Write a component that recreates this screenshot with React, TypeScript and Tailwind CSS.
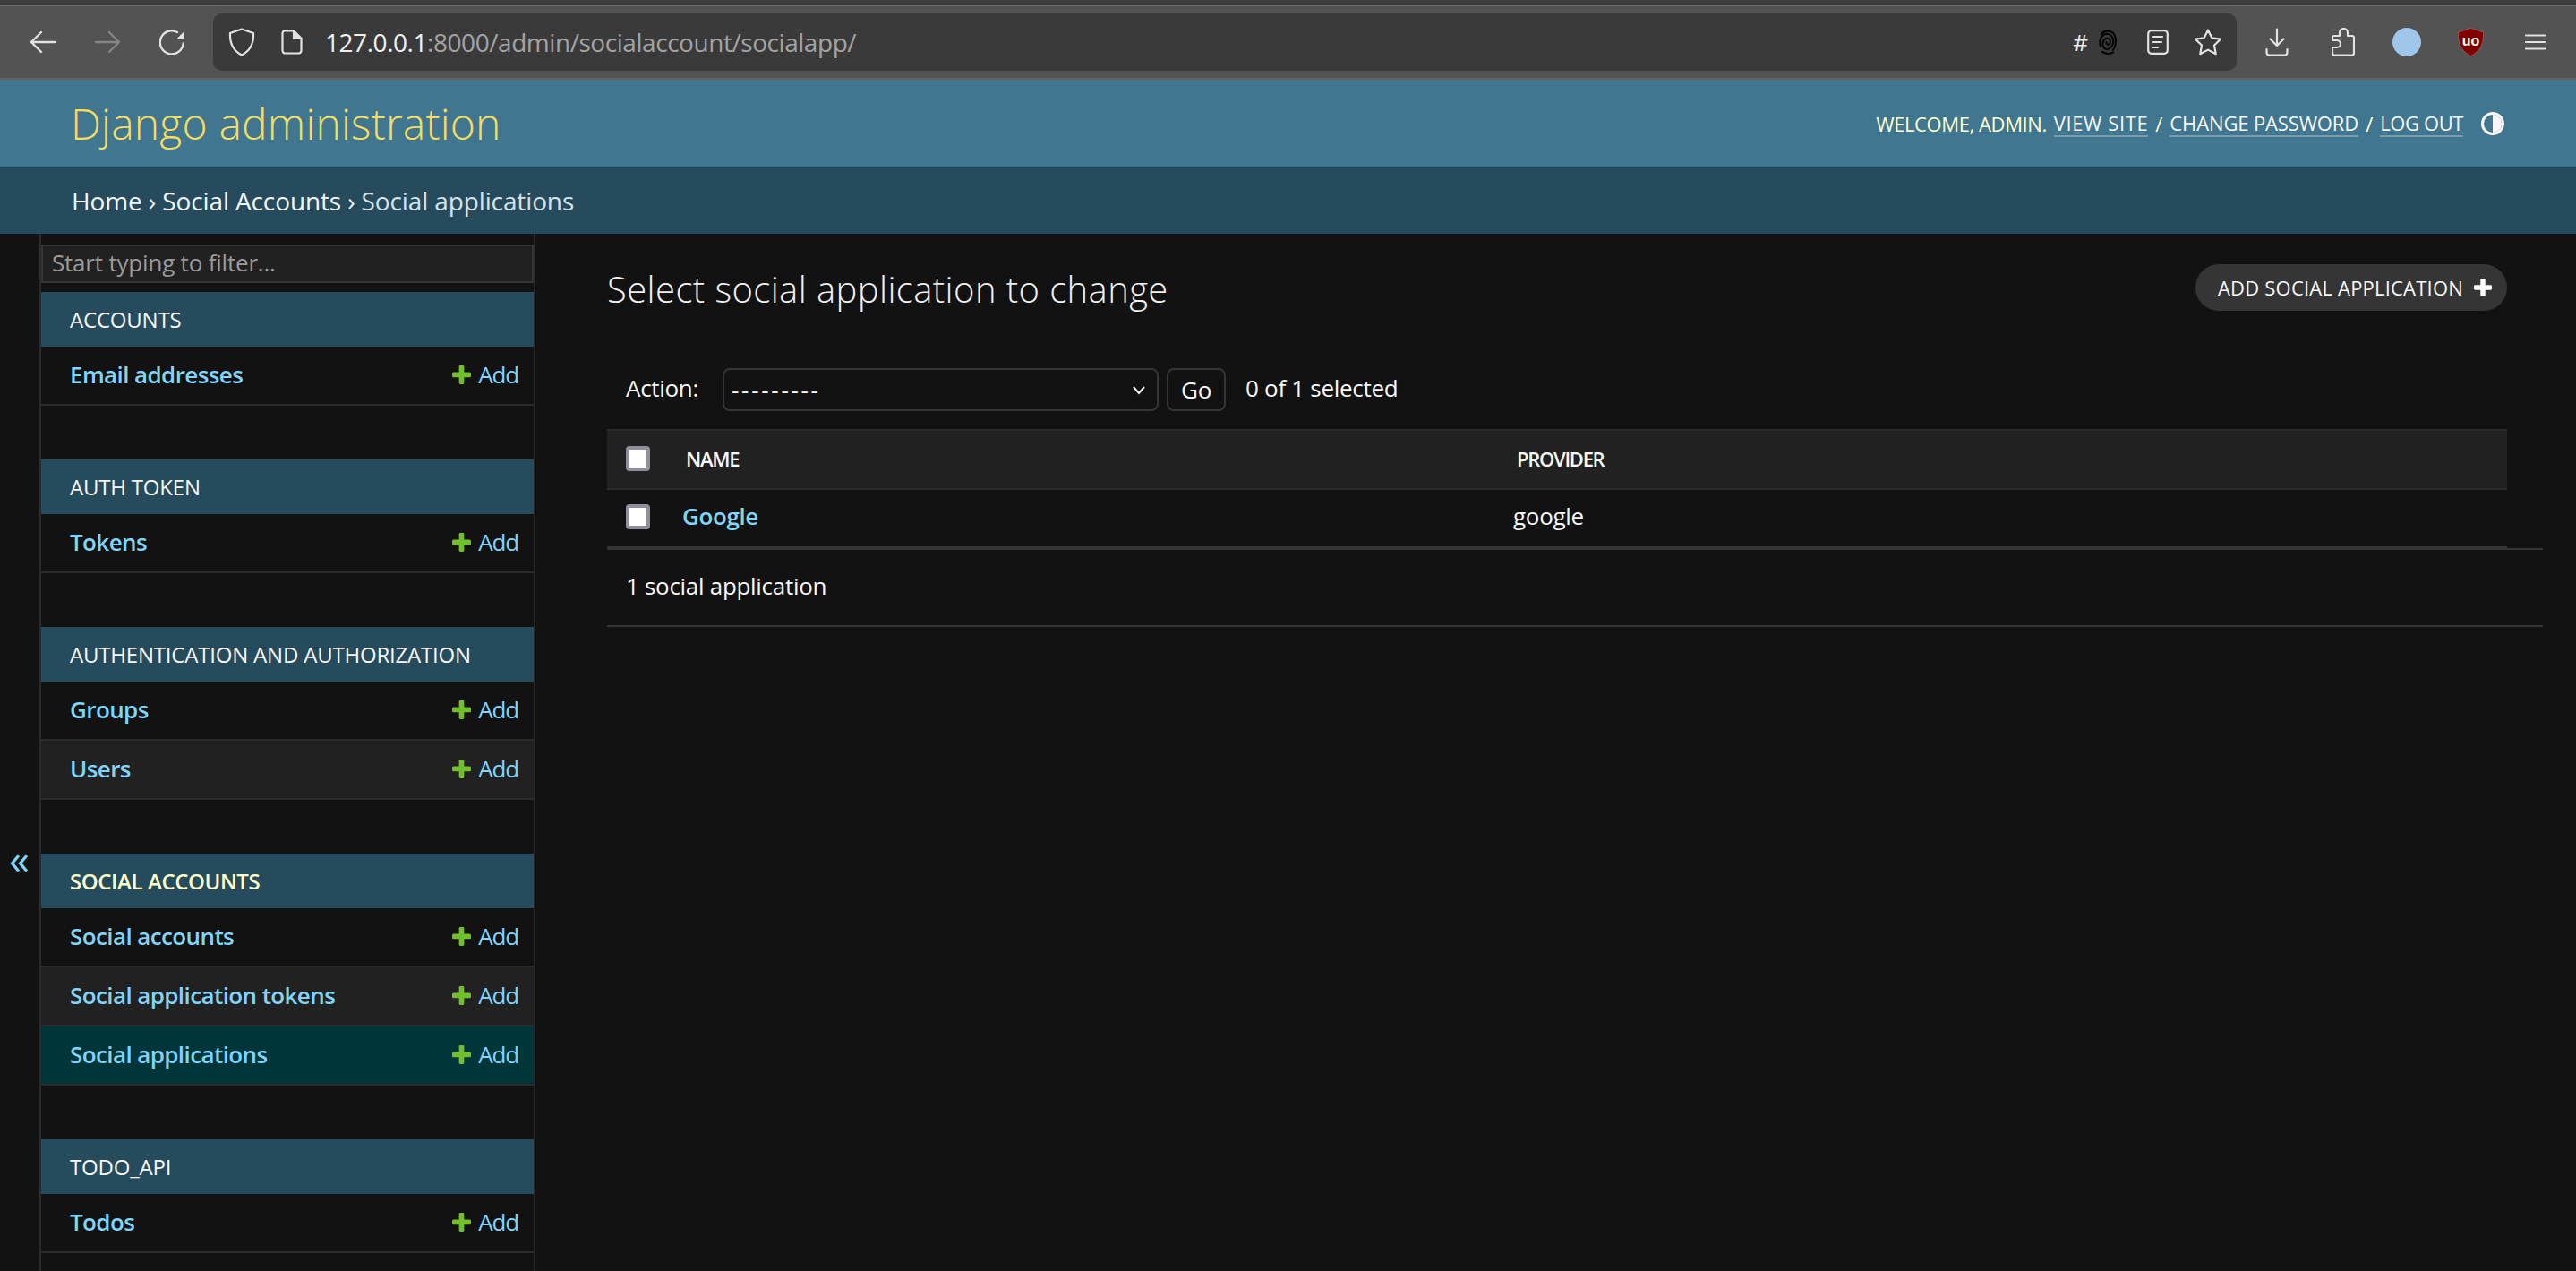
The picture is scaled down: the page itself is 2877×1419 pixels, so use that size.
import React from 'react';

const modules = [
  { name: 'Accounts', rows: ['Email addresses'] },
  { name: 'Auth Token', rows: ['Tokens'] },
  { name: 'Authentication and Authorization', rows: ['Groups', 'Users'] },
  { name: 'Social Accounts', rows: ['Social accounts', 'Social application tokens', 'Social applications'], current: true },
  { name: 'Todo_Api', rows: ['Todos'] },
];

const PlusIcon = ({ className }: { className: string }) => (
  <svg viewBox="192 192 1408 1408" className={className} fill="currentColor">
    <path d="M1600 796v192q0 40-28 68t-68 28h-416v416q0 40-28 68t-68 28h-192q-40 0-68-28t-28-68v-416h-416q-40 0-68-28t-28-68v-192q0-40 28-68t68-28h416v-416q0-40 28-68t68-28h192q40 0 68 28t28 68v416h416q40 0 68 28t28 68z" />
  </svg>
);

const Arrow = ({ className, flip }: { className: string; flip?: boolean }) => (
  <svg viewBox="0 0 28 24" className={className} fill="none" stroke="currentColor" strokeWidth="2.4" strokeLinecap="round" strokeLinejoin="round">
    <path d={flip ? 'M1 12H27M16 1L27 12L16 23' : 'M27 12H1M12 1L1 12L12 23'} />
  </svg>
);

const Toolbar = () => (
  <div className="h-[82px] shrink-0 flex items-center bg-[#535353] border-b-2 border-[#636363] text-[#e2e2e2]">
    <Arrow className="ml-[34px] w-[28px] h-[24px]" />
    <Arrow flip className="ml-[44px] w-[28px] h-[24px] text-[#858585]" />
    <svg viewBox="0 0 28 28" className="ml-[44px] w-[28px] h-[28px]" fill="none" stroke="currentColor" strokeWidth="2.4" strokeLinecap="round">
      <path d="M20 3A13 13 0 1 0 26.7 15.5" />
      <path d="M18.7 11L28 1.7V11Z" fill="currentColor" stroke="none" />
    </svg>
    <div className="ml-[32px] w-[2260px] h-[64px] rounded-[10px] bg-[#3a3a3a] flex items-center">
      <svg viewBox="0 0 30 32" className="ml-[17px] w-[30px] h-[32px]" fill="none" stroke="currentColor" strokeWidth="2.2" strokeLinejoin="round">
        <path d="M15 1.5L28 6C28.5 16 26 25 15 30.5C4 25 1.5 16 2 6Z" />
      </svg>
      <svg viewBox="0 0 24 28" className="ml-[29px] w-[24px] h-[28px]" fill="none" stroke="currentColor" strokeWidth="2.2" strokeLinejoin="round">
        <path d="M4 1.5H14L22.5 10V23.5A3 3 0 0 1 19.5 26.5H4.5A3 3 0 0 1 1.5 23.5V4A2.5 2.5 0 0 1 4 1.5Z" />
        <path d="M14 1.5V10H22.5Z" fill="currentColor" />
      </svg>
      <div className="ml-[25px] text-[28px] tracking-[-0.45px] text-[#a3a3a3] whitespace-nowrap">
        <span className="text-[#f0f0f0]">127.0.0.1</span>:8000/admin/socialaccount/socialapp/
      </div>
      <div className="ml-auto text-[26px] text-[#ececec]">#</div>
      <svg viewBox="0 0 20 30" className="ml-[12px] w-[20px] h-[30px]" fill="none" stroke="#050505" strokeWidth="2.1" strokeLinecap="round">
        <path d="M3 6C6 1.5 14 1.5 17 6C20 11 19.5 19 16 24" />
        <path d="M2 20C0.5 14 2 9 6 6.5C10 4.5 15 7 16 12C17 17 14 22 10 23C6 23.5 4 20 4.5 16C5 12 8 10 11 11C13.5 12.5 13.5 16.5 11 17.5C9 18 8 16.5 8.5 15" />
        <path d="M4 26C8 28.5 12 28.5 16 26.5" />
      </svg>
      <svg viewBox="0 0 24 28" className="ml-[34px] w-[24px] h-[28px]" fill="none" stroke="currentColor" strokeWidth="2.2" strokeLinecap="round">
        <rect x="1.2" y="1.2" width="21.6" height="25.6" rx="3.5" />
        <path d="M7 8H17M7 14H16M7 20H12" />
      </svg>
      <svg viewBox="0 0 32 30" className="ml-[28px] w-[32px] h-[30px]" fill="none" stroke="currentColor" strokeWidth="2.2" strokeLinejoin="round">
        <path d="M16 1.5L20.3 10.3L30 11.7L23 18.5L24.7 28.2L16 23.6L7.3 28.2L9 18.5L2 11.7L11.7 10.3Z" />
      </svg>
      <div className="w-[16px]" />
    </div>
    <svg viewBox="0 0 26 32" className="ml-[32px] w-[26px] h-[32px]" fill="none" stroke="currentColor" strokeWidth="2.2" strokeLinecap="round" strokeLinejoin="round">
      <path d="M13 1.5V20M5.5 12.5L13 20L20.5 12.5M1.5 24V27.5A3 3 0 0 0 4.5 30.5H21.5A3 3 0 0 0 24.5 27.5V24" />
    </svg>
    <svg viewBox="0 0 26 32" className="ml-[48px] w-[26px] h-[32px]" fill="none" stroke="currentColor" strokeWidth="2.2" strokeLinejoin="round">
      <path d="M9 9V5.5A4.5 4.5 0 0 1 18 5.5V9H23A2 2 0 0 1 25 11V28.5A2 2 0 0 1 23 30.5H3A2 2 0 0 1 1 28.5V22H6A4 4 0 0 0 6 14H1V11A2 2 0 0 1 3 9Z" />
    </svg>
    <div className="ml-[42px] w-[32px] h-[32px] rounded-full bg-[#a0c7ea]" />
    <svg viewBox="0 0 29 32" className="ml-[41px] w-[29px] h-[32px]">
      <path d="M14.5 0.5L28.5 5C29 16 26 26 14.5 31.5C3 26 0 16 0.5 5Z" fill="#800000" stroke="#a85a5a" strokeWidth="0.8" />
      <text x="14.5" y="20" textAnchor="middle" fontSize="16" fontWeight="700" fill="#ffffff" fontFamily="'Liberation Sans', sans-serif">uo</text>
    </svg>
    <svg viewBox="0 0 24 18" className="ml-[46px] w-[24px] h-[18px]" stroke="currentColor" strokeWidth="2.2" strokeLinecap="round">
      <path d="M1 1.5H23M1 9H23M1 16.5H23" />
    </svg>
  </div>
);

const AdminHeader = () => (
  <>
    <div className="h-[98px] shrink-0 bg-[#417690] flex items-center pl-[79px] pr-[80px]">
      <div className="text-[48px] font-light text-[#f5dd5d] tracking-[0.2px] leading-none">Django administration</div>
      <div className="ml-auto flex items-center text-[22px] uppercase text-[#ffffcc] gap-[8px] whitespace-nowrap">
        <span className="tracking-[-0.4px]">Welcome, admin.</span>
        <span className="text-[#f7f7f7] border-b-2 border-[#7a9cae] leading-[28px] tracking-[0.6px]">View site</span>
        <span>/</span>
        <span className="text-[#f7f7f7] border-b-2 border-[#7a9cae] leading-[28px] tracking-[-0.13px]">Change password</span>
        <span>/</span>
        <span className="text-[#f7f7f7] border-b-2 border-[#7a9cae] leading-[28px] tracking-[-0.4px]">Log out</span>
        <div className="ml-[12px] w-[26px] h-[26px] rounded-full border-[3px] border-[#f7f7f7] overflow-hidden flex justify-end">
          <div className="w-1/2 h-full bg-[#f7f7f7]" />
        </div>
      </div>
    </div>
    <div className="h-[74px] shrink-0 bg-[#264b5d] flex items-center pl-[80px] text-[28px] text-[#f2f6f8] tracking-[-0.12px]">
      Home › Social Accounts › <span className="ml-[7px] text-[#d4e2ea]">Social applications</span>
    </div>
  </>
);

const Sidebar = () => (
  <div className="flex shrink-0 h-full">
    <div className="w-[44px] pt-[674px] pl-[10px] text-[#81d4fa] text-[46px] leading-none">«</div>
    <div className="w-[554px] border-x-2 border-[#2b2b2b] pt-[12px]">
      <input
        readOnly
        placeholder="Start typing to filter..."
        className="block w-full h-[43px] px-[10px] pb-[3px] bg-[#212121] border-2 border-[#353535] text-[26px] placeholder:text-[#9a9a9a] tracking-[-0.2px]"
      />
      <div className="pt-[10px] flex flex-col gap-[60px]">
        {modules.map((m) => (
          <div key={m.name}>
            <div className={`h-[61px] flex items-center pl-[32px] bg-[#264b5d] text-[24px] uppercase ${m.current ? 'font-semibold text-[#ffffcc] tracking-[-0.4px]' : 'font-normal text-[#f7f7f7] tracking-[-0.2px]'}`}>
              {m.name}
            </div>
            {m.rows.map((row) => (
              <div
                key={row}
                className={`h-[66px] flex items-center pl-[32px] pr-[17px] pb-[2px] border-b-2 border-[#2b2b2b] text-[26px] text-[#81d4fa] ${
                  row === 'Social applications'
                    ? 'bg-[#00363a]'
                    : row === 'Users' || row === 'Social application tokens'
                      ? 'bg-[#212121]'
                      : 'bg-[#121212]'
                }`}
              >
                <span className="font-semibold tracking-[-0.6px]">{row}</span>
                <PlusIcon className="ml-auto shrink-0 w-[21px] h-[21px] text-[#70bf2b]" />
                <span className="ml-[8px] tracking-[-1.2px]">Add</span>
              </div>
            ))}
          </div>
        ))}
      </div>
    </div>
  </div>
);

const Checkbox = () => (
  <input
    type="checkbox"
    readOnly
    className="block appearance-none w-[27px] h-[28px] bg-white border-[4px] border-[#8f8f9d] rounded-[4px]"
  />
);

const Main = () => (
  <div className="flex-1 pl-[80px] pr-[37px] pt-[34px] text-[#f7f7f7]">
    <div className="flex items-start justify-between mr-[40px] h-[52px]">
      <h1 className="text-[40px] font-light leading-[56px] tracking-[0.4px] text-[#f0f0f0]">
        Select social application to change
      </h1>
      <div className="h-[52px] w-[348px] rounded-full bg-[#353535] flex items-center pl-[25px] text-[22px] uppercase tracking-[0.2px] whitespace-nowrap">
        Add social application
        <PlusIcon className="ml-auto mr-[17px] shrink-0 w-[20px] h-[20px] text-white" />
      </div>
    </div>
    <div className="mt-[64px] h-[48px] flex items-center pl-[21px] text-[26px] tracking-[-0.3px]">
      <span className="pb-[3px]">Action:</span>
      <div className="ml-[27px] w-[487px] h-[48px] rounded-[8px] border-2 border-[#353535] flex items-center justify-between pl-[8px] pr-[12px]">
        <span className="tracking-[2.7px] font-medium">---------</span>
        <svg viewBox="0 0 16 16" className="w-[16px] h-[16px]" fill="none" stroke="currentColor" strokeWidth="2">
          <path d="M2 5L8 12L14 5" />
        </svg>
      </div>
      <div className="ml-[9px] w-[66px] h-[48px] rounded-[8px] border-2 border-[#353535] flex items-center justify-center">Go</div>
      <span className="ml-[22px] pb-[3px]">0 of 1 selected</span>
    </div>
    <table className="mt-[20px] w-[2122px] table-fixed border-collapse">
      <colgroup>
        <col className="w-[72px]" />
        <col className="w-[928px]" />
        <col />
      </colgroup>
      <thead>
        <tr className="h-[66px] bg-[#212121] border-y-2 border-[#2b2b2b]">
          <th className="pl-[21px] pb-[3px]"><Checkbox /></th>
          <th className="pl-[16px] pb-[2px] text-left text-[22px] font-semibold uppercase tracking-[-1.3px]">Name</th>
          <th className="pl-[16px] pb-[2px] text-left text-[22px] font-semibold uppercase tracking-[-1.3px]">Provider</th>
        </tr>
      </thead>
      <tbody>
        <tr className="h-[64px] text-[26px]">
          <td className="pl-[21px] pb-[3px]"><Checkbox /></td>
          <td className="pl-[12px] pb-[4px] font-semibold text-[#81d4fa] tracking-[-0.4px]">Google</td>
          <td className="pl-[12px] pb-[4px] tracking-[-0.3px]">google</td>
        </tr>
      </tbody>
    </table>
    <div className="w-[2122px] h-[2px] bg-[#353535]" />
    <div className="h-[88px] flex items-center pl-[21px] pb-[3px] border-y-2 border-[#353535] text-[26px] tracking-[-0.3px]">
      1 social application
    </div>
  </div>
);

const App = () => {
  return (
    <div className="w-[2877px] h-[1419px] overflow-hidden flex flex-col bg-[#121212] font-['Open_Sans','Noto_Sans',sans-serif]">
      <div className="h-[7px] shrink-0 bg-[#3f3f3f] border-b border-[#6a6a6a]" />
      <Toolbar />
      <AdminHeader />
      <div className="flex-1 min-h-0 flex">
        <Sidebar />
        <Main />
      </div>
    </div>
  );
};

export default App;
